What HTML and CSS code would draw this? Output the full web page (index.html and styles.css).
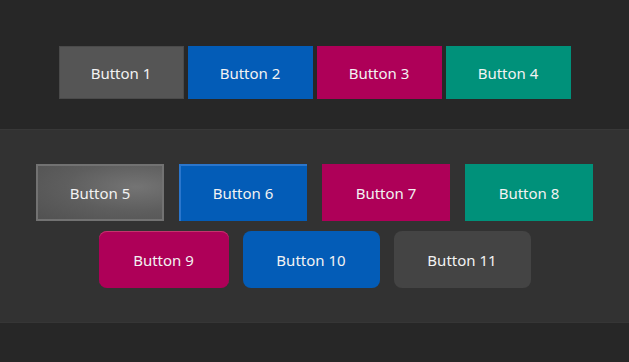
FILE: index.html
```html
<!DOCTYPE html>
<html lang="en">
<head>
    <meta charset="UTF-8">
    <meta name="viewport" content="width=device-width, initial-scale=1.0">
    <title>Buttons</title>
    <link rel="stylesheet" href="styles.css">
</head>
<body>
    <div class="band band-top">
        <div class="row row-flat">
            <button class="btn btn-grey">Button 1</button>
            <button class="btn btn-blue">Button 2</button>
            <button class="btn btn-pink">Button 3</button>
            <button class="btn btn-teal">Button 4</button>
        </div>
    </div>

    <div class="band band-mid">
        <div class="row row-big">
            <button class="btn btn-grey btn-shine">Button 5</button>
            <button class="btn btn-blue btn-edge">Button 6</button>
            <button class="btn btn-pink">Button 7</button>
            <button class="btn btn-teal">Button 8</button>
        </div>
        <div class="row row-round">
            <button class="btn btn-pink btn-soft">Button 9</button>
            <button class="btn btn-blue">Button 10</button>
            <button class="btn btn-dark">Button 11</button>
        </div>
    </div>
</body>
</html>
```

FILE: styles.css
```css
* {
    margin: 0;
    padding: 0;
    box-sizing: border-box;
    font-family: 'Noto Sans', 'Open Sans', sans-serif;
}

body {
    background-color: #272727;
    min-height: 100vh;
}

.band {
    display: flex;
    flex-direction: column;
    align-items: center;
}

.band-top {
    padding: 46px 0 30px;
    height: 129px;
}

.band-mid {
    background-color: #323232;
    padding: 35px 0 0;
    height: 194px;
    gap: 10px;
    box-shadow: 0 1px 0 #383838 inset, 0 -1px 0 #363636 inset;
}

.row {
    display: flex;
}

.btn {
    border: none;
    color: #f2f2f2;
    font-size: 15px;
    cursor: pointer;
}

.row-flat {
    gap: 4px;
}

.row-flat .btn {
    width: 125px;
    height: 53px;
}

.row-big {
    gap: 15px;
}

.row-big .btn {
    width: 128px;
    height: 57px;
}

.row-round {
    gap: 14px;
}

.row-round .btn {
    width: 137px;
    height: 57px;
    border-radius: 8px;
}

.row-round .btn-soft {
    width: 130px;
}

.btn-grey {
    background-color: #555555;
    box-shadow: 0 0 0 1px #4a4a4a inset;
}

.btn-blue {
    background-color: #035cb7;
}

.btn-pink {
    background-color: #ae0058;
}

.btn-teal {
    background-color: #00917a;
}

.btn-dark {
    background-color: #444444;
}

.btn-shine {
    background: radial-gradient(ellipse at 78% 40%, #747474 0%, #5e5e5e 50%, #505050 100%);
    box-shadow: 0 0 0 2px #727272 inset;
}

.btn-edge {
    box-shadow: 2px 2px 0 #2b76cc inset;
}

.btn-soft {
    box-shadow: 0 1px 0 #c4336d inset;
}
```
